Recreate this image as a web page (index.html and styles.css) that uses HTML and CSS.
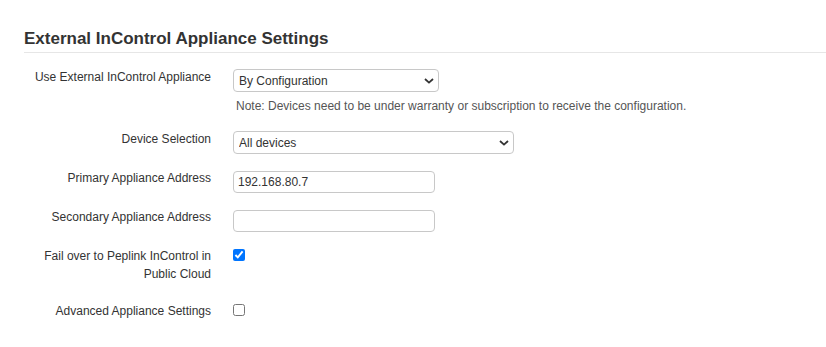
FILE: index.html
```
<!DOCTYPE html>
<html lang="en">

<head>
    <meta charset="UTF-8">
    <meta name="viewport" content="width=device-width, initial-scale=1.0">
    <title>External InControl Appliance Settings</title>
    <link rel="stylesheet" href="styles.css">
</head>

<body>
    <div class="panel">
        <h2 class="title">External InControl Appliance Settings</h2>

        <div class="form">
            <div class="row">
                <label class="label" for="useExternal">Use External InControl Appliance</label>
                <div class="field">
                    <div class="select-wrap select-short">
                        <select id="useExternal">
                            <option>By Configuration</option>
                        </select>
                        <svg class="chevron" width="10" height="6" viewBox="0 0 10 6">
                            <path d="M1 1l4 3.6L9 1" fill="none" stroke="#333" stroke-width="1.8" />
                        </svg>
                    </div>
                    <div class="note">Note: Devices need to be under warranty or subscription to receive the configuration.</div>
                </div>
            </div>

            <div class="row">
                <label class="label" for="deviceSelection">Device Selection</label>
                <div class="field">
                    <div class="select-wrap select-long">
                        <select id="deviceSelection">
                            <option>All devices</option>
                        </select>
                        <svg class="chevron" width="10" height="6" viewBox="0 0 10 6">
                            <path d="M1 1l4 3.6L9 1" fill="none" stroke="#333" stroke-width="1.8" />
                        </svg>
                    </div>
                </div>
            </div>

            <div class="row">
                <label class="label" for="primaryAddr">Primary Appliance Address</label>
                <div class="field field-input">
                    <input id="primaryAddr" type="text" value="192.168.80.7">
                </div>
            </div>

            <div class="row">
                <label class="label" for="secondaryAddr">Secondary Appliance Address</label>
                <div class="field field-input">
                    <input id="secondaryAddr" type="text" value="">
                </div>
            </div>

            <div class="row">
                <label class="label" for="failover">Fail over to Peplink InControl in Public Cloud</label>
                <div class="field field-check">
                    <input id="failover" type="checkbox" checked>
                </div>
            </div>

            <div class="row">
                <label class="label" for="advanced">Advanced Appliance Settings</label>
                <div class="field field-check">
                    <input id="advanced" type="checkbox">
                </div>
            </div>
        </div>
    </div>
</body>

</html>
```

FILE: styles.css
```
body {
    margin: 0;
    font-family: "Liberation Sans", Arial, Helvetica, sans-serif;
    font-size: 12px;
    color: #333;
    background-color: #fff;
}

.panel {
    padding: 29px 0 0 24px;
}

.title {
    margin: 0;
    padding-bottom: 3px;
    font-size: 17px;
    line-height: 20px;
    font-weight: bold;
    color: #333;
    border-bottom: 1px solid #e6e6e6;
}

.form {
    display: flex;
    flex-direction: column;
    gap: 15px;
    padding-top: 15px;
}

.row {
    display: grid;
    grid-template-columns: 187px 1fr;
    column-gap: 22px;
    align-items: start;
}

.label {
    text-align: right;
    line-height: 18px;
    padding-bottom: 4px;
    color: #333;
}

.field {
    padding-top: 1px;
}

.field-input {
    padding-top: 2px;
}

.field-check {
    padding-top: 2px;
    line-height: 0;
}

.select-wrap {
    position: relative;
}

.select-short {
    width: 206px;
}

.select-long {
    width: 281px;
}

select {
    appearance: none;
    -webkit-appearance: none;
    display: block;
    width: 100%;
    height: 23px;
    margin: 0;
    padding: 0 20px 0 5px;
    font-family: inherit;
    font-size: 12px;
    color: #333;
    background-color: #fff;
    border: 1px solid #c8c8c8;
    border-radius: 4px;
}

.chevron {
    position: absolute;
    right: 5px;
    top: 9px;
    pointer-events: none;
}

.note {
    margin-top: 5px;
    padding-left: 3px;
    line-height: 18px;
    color: #555;
}

input[type="text"] {
    display: block;
    box-sizing: border-box;
    width: 202px;
    height: 22px;
    margin: 0;
    padding: 0 4px;
    font-family: inherit;
    font-size: 12px;
    color: #333;
    border: 1px solid #c8c8c8;
    border-radius: 4px;
}

input[type="checkbox"] {
    width: 12px;
    height: 12px;
    margin: 0;
}
```
